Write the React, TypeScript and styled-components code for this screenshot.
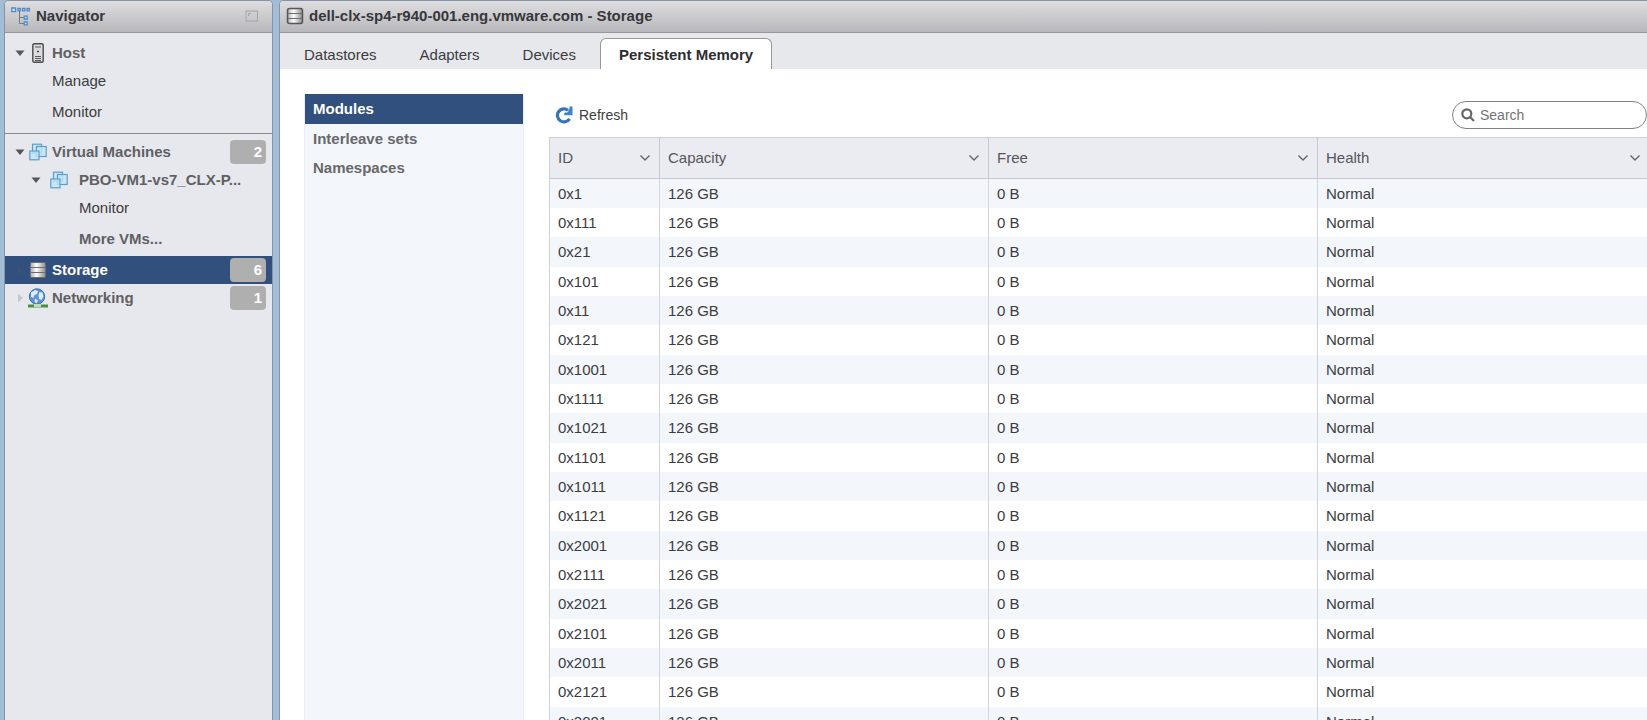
import React from "react";
import styled, { createGlobalStyle, css } from "styled-components";

const GlobalStyle = createGlobalStyle`
  *, *::before, *::after { box-sizing: border-box; }
  body {
    margin: 0;
    background: #a3bdd6;
    color: #3c3c40;
    font: 15px/20px "Liberation Sans", Arial, Helvetica, sans-serif;
  }
  button, input { font: inherit; color: inherit; }
  button { border: 0; padding: 0; background: none; cursor: pointer; text-align: left; }
  ul { list-style: none; margin: 0; padding: 0; }
  svg { display: block; flex: none; }
`;

const Shell = styled.div`
  display: flex;
  gap: 6px;
  height: 100vh;
  padding-left: 4px;
  overflow: hidden;
`;

const Panel = styled.div`
  display: flex;
  flex-direction: column;
  border: 1px solid #8494a6;
  border-bottom: 0;
  border-radius: 5px 5px 0 0;
  overflow: hidden;
`;

const NavPanel = styled(Panel).attrs({ as: "nav" })`
  flex: 0 0 269px;
  background: #e7e8ed;
`;

const MainPanel = styled(Panel).attrs({ as: "main" })`
  flex: 1;
  min-width: 0;
  border-right: 0;
  border-top-right-radius: 0;
  background: #fff;
`;

const PanelHeader = styled.header`
  display: flex;
  align-items: center;
  gap: 5px;
  flex: none;
  height: 32px;
  padding: 0 13px 1px 6px;
  border-bottom: 1px solid #98989c;
  background: linear-gradient(#dedee0, #b8b8bc);
`;

const PanelTitle = styled.h1`
  flex: 1;
  margin: 0;
  font-size: 15px;
  line-height: 20px;
  color: #37373b;
`;

const NavGroup = styled.ul`
  padding: 6px 0 4px;
  & + & { border-top: 1px solid #8b8b90; padding-top: 4px; }
`;

const NavItem = styled.li<{ $selected?: boolean; $tall?: boolean }>`
  display: flex;
  align-items: center;
  height: ${(p) => (p.$tall ? 34 : 28)}px;
  padding-right: 6px;
  background: ${(p) => (p.$selected ? "#32507e" : "transparent")};
`;

const Toggle = styled.button<{ $level: number }>`
  display: flex;
  justify-content: center;
  flex: none;
  width: 16px;
  margin-left: ${(p) => 7 + p.$level * 16}px;
`;

const NavIcon = styled.span<{ $wide?: boolean }>`
  display: flex;
  justify-content: center;
  flex: none;
  width: ${(p) => (p.$wide ? 35 : 24)}px;
  padding-right: ${(p) => (p.$wide ? 6 : 4)}px;
`;

const NavLink = styled.a<{ $indent?: number; $strong?: boolean; $selected?: boolean }>`
  flex: 1;
  min-width: 0;
  padding-left: ${(p) => p.$indent ?? 0}px;
  text-decoration: none;
  white-space: nowrap;
  color: ${(p) => (p.$selected ? "#fff" : p.$strong ? "#606064" : "#3c3c40")};
  font-weight: ${(p) => (p.$strong ? 700 : 400)};
`;

const Badge = styled.span`
  width: 36px;
  height: 24px;
  padding: 0 4px;
  border-radius: 4px;
  background: #afafb0;
  color: #fff;
  font-weight: 700;
  line-height: 24px;
  text-align: right;
`;

const TabBar = styled.div`
  display: flex;
  align-items: flex-end;
  flex: none;
  height: 36px;
  padding: 0 5px;
  background: #e7e8ec;
`;

const Tab = styled.button<{ $active?: boolean }>`
  height: 31px;
  padding: 2px 18px 0;
  border: 1px solid transparent;
  border-bottom: 0;
  margin-right: 5px;
  ${(p) =>
    p.$active &&
    css`
      border-color: #97979c;
      border-radius: 6px 6px 0 0;
      background: #fff;
      font-weight: 700;
      color: #2e2e32;
    `}
`;

const Content = styled.div`
  display: flex;
  gap: 25px;
  flex: 1;
  min-height: 0;
  padding: 25px 0 0 24px;
`;

const SideList = styled.ul`
  flex: 0 0 220px;
  background: #f3f6fb;
  border: 1px solid #ebeff5;
  border-width: 0 1px;
`;

const SideButton = styled.button<{ $active?: boolean }>`
  width: 100%;
  height: ${(p) => (p.$active ? 30 : 29)}px;
  padding: 0 8px;
  font-weight: 700;
  color: ${(p) => (p.$active ? "#fff" : "#68686c")};
  background: ${(p) => (p.$active ? "#32507e" : "transparent")};
`;

const Workspace = styled.section`
  flex: 1;
  min-width: 0;
`;

const Toolbar = styled.div`
  display: flex;
  align-items: center;
  justify-content: space-between;
  height: 43px;
  padding: 0 0 2px 6px;
`;

const RefreshButton = styled.button`
  display: flex;
  align-items: center;
  gap: 6px;
  font-size: 14px;
`;

const SearchBox = styled.label`
  display: flex;
  align-items: center;
  gap: 5px;
  width: 195px;
  height: 28px;
  padding: 0 8px;
  border: 1px solid #828286;
  border-radius: 14px;
  background: #fff;
`;

const SearchInput = styled.input`
  flex: 1;
  min-width: 0;
  padding: 0;
  border: 0;
  outline: 0;
  background: none;
  font-size: 14px;
  &::placeholder { color: #737377; opacity: 1; }
`;

const Grid = styled.table`
  width: 100%;
  table-layout: fixed;
  border-collapse: separate;
  border-spacing: 0;
  border: 1px solid #cfd0d4;
  border-width: 1px 0 0 1px;
`;

const HeadCell = styled.th<{ $narrow?: boolean }>`
  width: ${(p) => (p.$narrow ? "110px" : "auto")};
  height: 41px;
  padding: 0 8px;
  border-right: 1px solid #c8c9ce;
  border-bottom: 1px solid #c8c9ce;
  background: #ebecf1;
  color: #55555a;
  font-weight: 400;
  &:last-child { border-right: 0; padding-right: 6px; }
`;

const SortButton = styled.button`
  display: flex;
  align-items: center;
  justify-content: space-between;
  width: 100%;
`;

/* Rows average a third over 29px, so every third one takes the extra pixel. */
const Row = styled.tr`
  height: 29px;
  &:nth-child(3n) { height: 30px; }
  &:nth-child(odd) { background: #f3f6fb; }
`;

const Cell = styled.td`
  padding: 0 8px;
  border-right: 1px solid #d3d4d9;
  &:last-child { border-right: 0; }
`;

const TreeIcon = () => (
  <svg width="20" height="20" viewBox="0 0 20 20" fill="none" aria-hidden="true">
    <path d="M8.500 5v12.500M8.500 11.500H14M8.500 17.500H14" stroke="#77787c" />
    <g stroke="#4f8ac4" strokeWidth="1.300" fill="#cfe3f5">
      <path d="M.8 2h3.800v3.600H.8zM7 2.500h2.300v2.300H7zM11.500 2.500h2.300v2.300h-2.300zM16 2.500h2.300v2.300H16z" />
      <path d="M13.200 10.200h3v2.800h-3zM13.200 16h3v2.800h-3z" />
    </g>
  </svg>
);

const DockIcon = () => (
  <svg width="14" height="12" viewBox="0 0 14 12" fill="none" aria-hidden="true">
    <rect x="1" y="1" width="11.500" height="10" stroke="#a4a4a8" />
    <path d="M3.500 6V3.500H6" stroke="#a4a4a8" />
  </svg>
);

const Triangle = ({ open, faint }: { open?: boolean; faint?: boolean }) => (
  <svg width="10" height="10" viewBox="0 0 10 10" aria-hidden="true">
    <path d={open ? "M.5 2.500h9L5 8z" : "M3 .5l5 4.500-5 4.500z"} fill={open ? "#55565a" : faint ? "#3c5475" : "#c6c7cc"} />
  </svg>
);

const HostIcon = () => (
  <svg width="12" height="20" viewBox="0 0 12 20" aria-hidden="true">
    <rect x=".8" y=".8" width="10.400" height="18.400" rx="1.500" fill="#dcdcde" stroke="#4b4b4e" strokeWidth="1.400" />
    <path d="M3 4h6M3 13.500h6M3 15.500h6M3 17.500h6" stroke="#58585b" />
    <path d="M5 8.500h2" stroke="#444" strokeWidth="1.500" />
  </svg>
);

const VmIcon = () => (
  <svg width="18" height="18" viewBox="0 0 18 18" aria-hidden="true">
    <g stroke="#5b9fc9" strokeWidth="1.200" fill="#c3e3f5" fillOpacity=".8">
      <rect x="3.500" y="1.200" width="9" height="9" />
      <rect x="7.500" y="3.500" width="9.700" height="10" />
      <rect x=".8" y="8" width="9.200" height="8.800" />
    </g>
  </svg>
);

const StorageIcon = ({ framed }: { framed?: boolean }) => (
  <svg width="18" height="18" viewBox="0 0 18 18" aria-hidden="true">
    <defs>
      <linearGradient id="metal">
        <stop offset="0" stopColor="#a9a9ab" />
        <stop offset=".4" stopColor="#fff" />
        <stop offset="1" stopColor="#8b8b8d" />
      </linearGradient>
    </defs>
    <rect x="1.500" y="1.500" width="15" height="15" rx="2" fill="url(#metal)" stroke={framed ? "#57575a" : "none"} strokeWidth="1.500" />
    <path d="M2 6.500h14M2 11.500h14" fill="none" stroke="#6d6d70" strokeWidth="1.200" />
    {!framed && <path d="M1 1.500h16M1 16.500h16" stroke="#6b6b6e" />}
  </svg>
);

const NetworkIcon = () => (
  <svg width="20" height="20" viewBox="0 0 20 20" aria-hidden="true">
    <circle cx="9" cy="8.500" r="7.700" fill="#5b92d2" stroke="#3f6ea9" />
    <path d="M3 4.500l4-2.500 3 1-1 3-3 1.500-.5 2.500-2.500-1zM11.500 4l3 .5 1 4-2 3.500-2.500-1-.5-3.500zM7 10.500l3 2-1.500 3-2-2z" fill="#dcebfa" />
    <path d="M0 18h20" stroke="#47913f" strokeWidth="3" />
    <path d="M6 17.500h7" stroke="#c5d9c2" strokeWidth="3" />
  </svg>
);

const RefreshIcon = () => (
  <svg width="18" height="18" viewBox="0 0 18 18" fill="none" aria-hidden="true">
    <path d="M14.500 12.800A6.500 6.500 0 1 1 13 4.300" stroke="#3575b8" strokeWidth="3.200" />
    <path d="M17.500 .5v8.700H9.200V7l2.300-1 3-3V.5z" fill="#3f83c6" />
    <path d="M11.500 6.500l2-1.500" stroke="#fff" />
  </svg>
);

const SearchIcon = () => (
  <svg width="14" height="14" viewBox="0 0 14 14" fill="none" stroke="#66666a" strokeWidth="2.200" aria-hidden="true">
    <circle cx="5.800" cy="5.800" r="4.500" />
    <path d="M9 9l4 4" />
  </svg>
);

const Chevron = () => (
  <svg width="12" height="8" viewBox="0 0 12 8" fill="none" aria-hidden="true">
    <path d="M1.500 1.500L6 6l4.500-4.500" stroke="#66666a" strokeWidth="1.400" />
  </svg>
);

const tabs = ["Datastores", "Adapters", "Devices", "Persistent Memory"];
const sections = ["Modules", "Interleave sets", "Namespaces"];
const columns = ["ID", "Capacity", "Free", "Health"];
const moduleIds = [
  "0x1", "0x111", "0x21", "0x101", "0x11", "0x121", "0x1001", "0x1111", "0x1021", "0x1101",
  "0x1011", "0x1121", "0x2001", "0x2111", "0x2021", "0x2101", "0x2011", "0x2121", "0x3001",
];

export default function App() {
  return (
    <>
      <GlobalStyle />
      <Shell>
        <NavPanel>
          <PanelHeader>
            <TreeIcon />
            <PanelTitle as="h2">Navigator</PanelTitle>
            <button aria-label="Collapse navigator"><DockIcon /></button>
          </PanelHeader>
          <NavGroup>
            <NavItem>
              <Toggle $level={0} aria-label="Collapse Host"><Triangle open /></Toggle>
              <NavIcon><HostIcon /></NavIcon>
              <NavLink href="#host" $strong>Host</NavLink>
            </NavItem>
            <NavItem><NavLink href="#manage" $indent={47}>Manage</NavLink></NavItem>
            <NavItem $tall><NavLink href="#monitor" $indent={47}>Monitor</NavLink></NavItem>
          </NavGroup>
          <NavGroup>
            <NavItem>
              <Toggle $level={0} aria-label="Collapse Virtual Machines"><Triangle open /></Toggle>
              <NavIcon><VmIcon /></NavIcon>
              <NavLink href="#vms" $strong>Virtual Machines</NavLink>
              <Badge>2</Badge>
            </NavItem>
            <NavItem>
              <Toggle $level={1} aria-label="Collapse PBO-VM1"><Triangle open /></Toggle>
              <NavIcon $wide><VmIcon /></NavIcon>
              <NavLink href="#pbo" $strong>PBO-VM1-vs7_CLX-P...</NavLink>
            </NavItem>
            <NavItem><NavLink href="#vm-monitor" $indent={74}>Monitor</NavLink></NavItem>
            <NavItem $tall><NavLink href="#more" $indent={74} $strong>More VMs...</NavLink></NavItem>
            <NavItem $selected>
              <Toggle $level={0} aria-label="Expand Storage"><Triangle faint /></Toggle>
              <NavIcon><StorageIcon /></NavIcon>
              <NavLink href="#storage" $strong $selected>Storage</NavLink>
              <Badge>6</Badge>
            </NavItem>
            <NavItem>
              <Toggle $level={0} aria-label="Expand Networking"><Triangle /></Toggle>
              <NavIcon><NetworkIcon /></NavIcon>
              <NavLink href="#networking" $strong>Networking</NavLink>
              <Badge>1</Badge>
            </NavItem>
          </NavGroup>
        </NavPanel>
        <MainPanel>
          <PanelHeader>
            <StorageIcon framed />
            <PanelTitle>dell-clx-sp4-r940-001.eng.vmware.com - Storage</PanelTitle>
          </PanelHeader>
          <TabBar role="tablist">
            {tabs.map((t, i) => (
              <Tab key={t} role="tab" aria-selected={i === 3} $active={i === 3}>{t}</Tab>
            ))}
          </TabBar>
          <Content>
            <SideList>
              {sections.map((s, i) => (
                <li key={s}><SideButton $active={i === 0}>{s}</SideButton></li>
              ))}
            </SideList>
            <Workspace>
              <Toolbar>
                <RefreshButton><RefreshIcon />Refresh</RefreshButton>
                <SearchBox>
                  <SearchIcon />
                  <SearchInput type="text" placeholder="Search" aria-label="Search" />
                </SearchBox>
              </Toolbar>
              <Grid>
                <thead>
                  <tr>
                    {columns.map((c, i) => (
                      <HeadCell key={c} scope="col" $narrow={i === 0}>
                        <SortButton>{c}<Chevron /></SortButton>
                      </HeadCell>
                    ))}
                  </tr>
                </thead>
                <tbody>
                  {moduleIds.map((id) => (
                    <Row key={id}>
                      <Cell>{id}</Cell>
                      <Cell>126 GB</Cell>
                      <Cell>0 B</Cell>
                      <Cell>Normal</Cell>
                    </Row>
                  ))}
                </tbody>
              </Grid>
            </Workspace>
          </Content>
        </MainPanel>
      </Shell>
    </>
  );
}
